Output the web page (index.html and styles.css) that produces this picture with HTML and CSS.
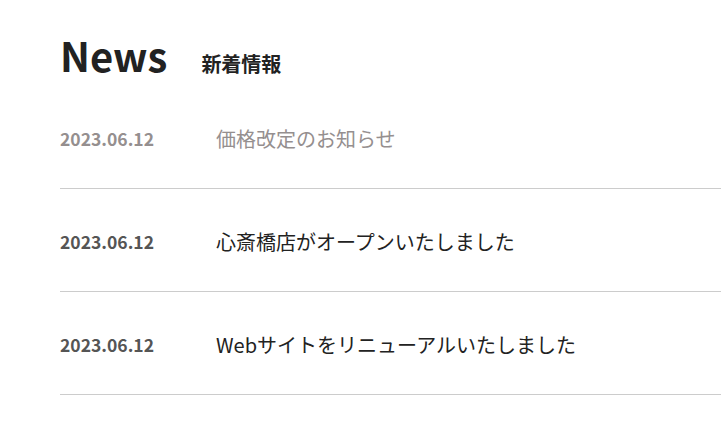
FILE: index.html
```html
<!DOCTYPE html>
<html lang="ja">
<head>
    <meta charset="UTF-8">
    <meta name="viewport" content="width=device-width, initial-scale=1.0">
    <title>News</title>
    <link rel="stylesheet" href="styles.css">
</head>
<body>
    <section class="news">
        <div class="news-head">
            <h2>News</h2>
            <p class="news-sub">新着情報</p>
        </div>
        <ul class="news-list">
            <li class="news-item is-read">
                <span class="news-date">2023.06.12</span>
                <a href="#" class="news-title">価格改定のお知らせ</a>
            </li>
            <li class="news-item">
                <span class="news-date">2023.06.12</span>
                <a href="#" class="news-title">心斎橋店がオープンいたしました</a>
            </li>
            <li class="news-item">
                <span class="news-date">2023.06.12</span>
                <a href="#" class="news-title">Webサイトをリニューアルいたしました</a>
            </li>
        </ul>
    </section>
</body>
</html>
```

FILE: styles.css
```css
body {
    margin: 0;
    padding: 0;
    background: #fff;
    color: #222;
    font-family: "Noto Sans CJK JP", "Noto Sans", sans-serif;
}
.news {
    padding: 27px 0 0 60px;
}
.news-head {
    display: flex;
    align-items: baseline;
    gap: 34px;
    margin-bottom: 3px;
}
.news-head h2 {
    margin: 0;
    font-size: 40px;
    font-weight: 700;
    line-height: 56px;
}
.news-sub {
    margin: 0;
    font-size: 20px;
    font-weight: 700;
}
.news-list {
    list-style: none;
    margin: 0;
    padding: 0;
}
.news-item {
    display: flex;
    align-items: center;
    padding: 36px 0 32px;
    border-bottom: 1px solid #ccc;
}
.news-date {
    width: 156px;
    flex-shrink: 0;
    font-size: 17.5px;
    font-weight: 700;
    color: #555;
    line-height: 34px;
}
.news-title {
    font-size: 20px;
    line-height: 34px;
    color: #222;
    text-decoration: none;
}
.is-read .news-date,
.is-read .news-title {
    color: #958f8f;
}
```
